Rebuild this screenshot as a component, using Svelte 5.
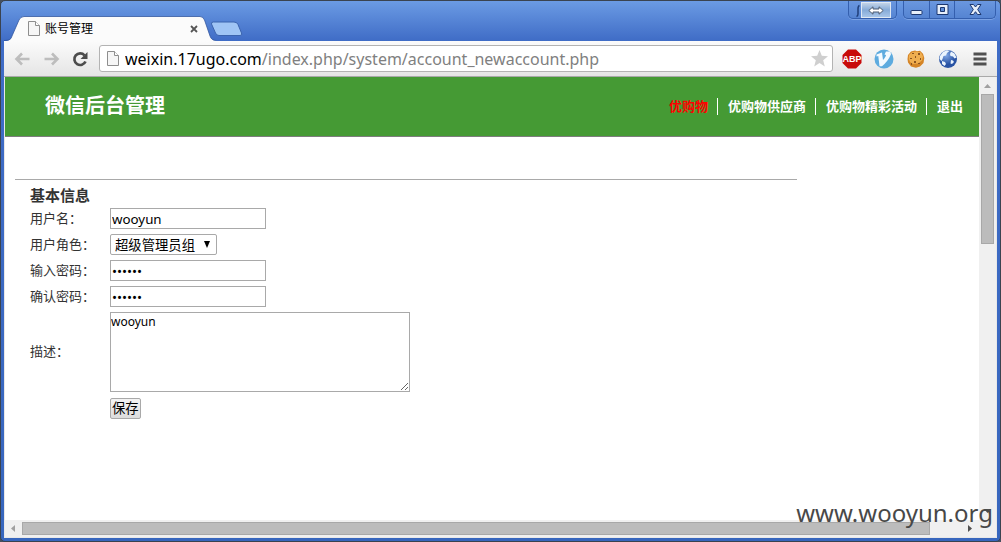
<script>
  const nav = [
    { label: '优购物', current: true },
    { label: '优购物供应商' },
    { label: '优购物精彩活动' },
    { label: '退出' }
  ];
  const roles = ['超级管理员组'];

  let username = $state('wooyun');
  let role = $state('超级管理员组');
  let password = $state('wooyun');
  let confirmation = $state('wooyun');
  let description = $state('wooyun');
</script>

{#snippet pageIcon()}
  <svg class="file" width="12" height="15" viewBox="0 0 12 15" aria-hidden="true">
    <path d="M.5.5h7l4 4v10H.5z" fill="#f6f6f6" stroke="#8e8e8e" />
    <path d="M7.5.5v4h4" fill="#fff" stroke="#8e8e8e" />
  </svg>
{/snippet}

<div class="window">
  <header class="titlebar">
    <div class="tab">
      <svg class="tab-shape" width="212" height="25" viewBox="0 0 212 25" aria-hidden="true">
        <path d="M0 25C6 25 7 23 8 20L15 4Q16.500 .5 20 .5H196Q199 .5 200.500 4L206 20Q207.500 24.500 212 24.500V25z" fill="#fbfbfb" />
        <path d="M0 24.500C6 24.500 7 23 8 20L15 4Q16.500 .5 20 .5H196Q199 .5 200.500 4L206 20Q207.500 24.500 212 24.500" fill="none" stroke="#2f539b" stroke-opacity=".75" />
      </svg>
      <div class="tab-content">
        {@render pageIcon()}
        <span>账号管理</span>
        <button class="plain close" aria-label="关闭标签页">
          <svg width="8" height="8" viewBox="0 0 8 8"><path d="M1 1l6 6M7 1L1 7" stroke="#555" stroke-width="1.800" /></svg>
        </button>
      </div>
    </div>
    <button class="plain newtab" aria-label="新标签页">
      <svg width="33" height="16" viewBox="0 0 33 16">
        <path d="M3.500 1H24Q27 1 28 3.500L31.500 12Q32.500 14.500 30 14.500H9Q6.500 14.500 5.500 12L1.500 3Q1 1 3.500 1z" fill="#9fc5f5" stroke="#3b64ae" />
      </svg>
    </button>
    <div class="caption">
      <div class="group resize">
        <svg width="12" height="18" viewBox="0 0 12 18" aria-hidden="true"><path d="M10.500 4.500Q9 5 9 8v5q0 2-1.500 2.500" fill="none" stroke="#1f3e78" stroke-width="1.500" /></svg>
        <button class="plain" aria-label="切换窗口">
          <svg width="16" height="9" viewBox="0 0 16 9"><path d="M.8 4.500L5 .8v2.200h6V.8l4.200 3.700L11 8.200V6H5v2.200z" fill="#fff" stroke="#4c5b70" /></svg>
        </button>
      </div>
      <div class="group controls">
        <button class="plain" aria-label="最小化">
          <svg width="13" height="13" viewBox="0 0 13 13"><rect x="1" y="7.500" width="11" height="4" rx="1" fill="#e7effa" stroke="#1c376f" /></svg>
        </button>
        <button class="plain" aria-label="最大化">
          <svg width="13" height="13" viewBox="0 0 13 13"><path fill-rule="evenodd" d="M1 1.500h11v10H1zM4.500 4.500v4h4v-4z" fill="#e7effa" stroke="#1c376f" /></svg>
        </button>
        <button class="plain" aria-label="关闭">
          <svg width="13" height="13" viewBox="0 0 13 13"><path d="M1 1.500h3.500l2 2.500 2-2.500H12L8.700 6.500l3.300 5H8.500l-2-2.800-2 2.800H1l3.300-5z" fill="#e7effa" stroke="#1c376f" /></svg>
        </button>
      </div>
    </div>
  </header>

  <div class="toolbar">
    <div class="history">
      <button class="plain" aria-label="后退">
        <svg width="17" height="16" viewBox="0 0 17 16"><path d="M15.500 8H3M8 2.500L2.500 8 8 13.500" fill="none" stroke="#bdbdbd" stroke-width="2.600" /></svg>
      </button>
      <button class="plain" aria-label="前进">
        <svg width="17" height="16" viewBox="0 0 17 16"><path d="M1.500 8H14M9 2.500L14.500 8 9 13.500" fill="none" stroke="#bdbdbd" stroke-width="2.600" /></svg>
      </button>
      <button class="plain" aria-label="重新加载">
        <svg width="17" height="16" viewBox="0 0 17 16">
          <path d="M13.500 10.500A5.800 5.800 0 1 1 12.500 4.300" fill="none" stroke="#4c4c4c" stroke-width="2.700" />
          <path d="M15.500 1v7H8.500z" fill="#4c4c4c" />
        </svg>
      </button>
    </div>
    <div class="omnibox">
      {@render pageIcon()}
      <div class="url"><span>weixin.17ugo.com</span>/index.php/system/account_newaccount.php</div>
      <button class="plain" aria-label="加入书签">
        <svg width="17" height="17" viewBox="0 0 17 17"><path d="M8.500 0l2.300 5.800 6.200.4-4.800 4 1.600 6.300-5.300-3.500-5.300 3.500 1.600-6.300L0 6.200l6.200-.4z" fill="#cfcfcf" /></svg>
      </button>
    </div>
    <div class="extensions">
      <button class="plain" aria-label="Adblock Plus">
        <svg width="20" height="20" viewBox="0 0 20 20">
          <path d="M6 .5h8L19.500 6v8L14 19.500H6L.5 14V6z" fill="#c80a0a" />
          <text x="10" y="13" text-anchor="middle" class="abp">ABP</text>
        </svg>
      </button>
      <button class="plain" aria-label="Vimium">
        <svg width="20" height="20" viewBox="0 0 20 20">
          <circle cx="10" cy="10" r="9.500" fill="#5dabdf" />
          <path d="M2.500 5.500L8 3.500 9 11q3-3.500 3-5l-1.500-.5L12 2.500h4.500l.5 2.700q-3 7-9 12H5.500L4.300 7l-1.800.5z" fill="#f3faff" />
        </svg>
      </button>
      <button class="plain" aria-label="Cookies">
        <svg width="20" height="20" viewBox="0 0 20 20">
          <path d="M2 6l3-3.500 4-1 2 .8 3-.6 3 3 1.300 4.300L17.500 14 14 17.500l-4 1.300-5-1.300L2 13.500 1.500 10z" fill="#d58527" />
          <path d="M3 6l3-2.800 4-.7 5 1 2 4-1 4-4 3-5 .5-3-2L2.800 10z" fill="#efae50" />
          <g fill="#8a5420"><rect x="6" y="4" width="2" height="1" /><rect x="12" y="4" width="2" height="2" /><rect x="9" y="7" width="1" height="2" /><rect x="4" y="9" width="2" height="1" /><rect x="14" y="9" width="1" height="2" /><rect x="8" y="12" width="2" height="2" /><rect x="12" y="14" width="2" height="1" /><rect x="5" y="14" width="1" height="2" /></g>
        </svg>
      </button>
      <button class="plain" aria-label="代理">
        <svg width="20" height="20" viewBox="0 0 20 20">
          <defs><radialGradient id="sea" cx=".4" cy=".3"><stop offset="0" stop-color="#7fa6e4" /><stop offset="1" stop-color="#2853a4" /></radialGradient></defs>
          <circle cx="10" cy="10" r="9" fill="url(#sea)" />
          <path d="M2 7l3-4 4-1.700 2.500.7L9 4 8 6.500 5.500 7l-1 3-1 2-2-2zM13 2.500l3.500 2 2 4-2 1-1.500-2-2.500-.5-.5-2zM4 12l3 1 1 2-1.500 2L4 15zM13 11l2 .5 1 1.500-2 2-1.500-.5z" fill="#eaf4fd" />
        </svg>
      </button>
      <button class="plain menu" aria-label="菜单">
        <svg width="14" height="14" viewBox="0 0 14 14"><path d="M.5 2h13M.5 7h13M.5 12h13" stroke="#505050" stroke-width="3" /></svg>
      </button>
    </div>
  </div>

  <div class="viewport">
    <main class="page">
      <div class="site-header">
        <h1>微信后台管理</h1>
        <nav>
          {#each nav as item}
            <a href="#top" class:current={item.current}>{item.label}</a>
          {/each}
        </nav>
      </div>
      <form onsubmit={(e) => e.preventDefault()}>
        <h2>基本信息</h2>
        <div class="fields">
          <label for="username">用户名：</label>
          <input id="username" type="text" bind:value={username} />
          <label for="role">用户角色：</label>
          <div class="select">
            <select id="role" bind:value={role}>
              {#each roles as name}
                <option>{name}</option>
              {/each}
            </select>
            <svg width="6" height="7" viewBox="0 0 6 7" aria-hidden="true"><path d="M0 0h6L3 7z" /></svg>
          </div>
          <label for="password">输入密码：</label>
          <input id="password" type="password" bind:value={password} />
          <label for="confirmation">确认密码：</label>
          <input id="confirmation" type="password" bind:value={confirmation} />
          <label for="description">描述：</label>
          <textarea id="description" bind:value={description}></textarea>
          <button class="save">保存</button>
        </div>
      </form>
    </main>
    <div class="scroll vertical" aria-hidden="true">
      <svg width="7" height="4" viewBox="0 0 7 4"><path d="M0 4L3.500 0 7 4z" fill="#a0a0a0" /></svg>
      <div class="thumb"></div>
      <svg width="7" height="4" viewBox="0 0 7 4"><path d="M0 0h7L3.500 4z" fill="#505050" /></svg>
    </div>
    <div class="scroll horizontal" aria-hidden="true">
      <svg width="4" height="7" viewBox="0 0 4 7"><path d="M4 0v7L0 3.500z" fill="#a0a0a0" /></svg>
      <div class="thumb"></div>
      <svg width="4" height="7" viewBox="0 0 4 7"><path d="M0 0v7l4-3.500z" fill="#505050" /></svg>
    </div>
    <div class="corner"></div>
  </div>
  <div class="watermark">www.wooyun.org</div>
</div>

<style>
  :global(body) {
    margin: 0;
    background: #46505f;
  }

  .window {
    position: relative;
    box-sizing: border-box;
    min-height: 100vh;
    display: flex;
    flex-direction: column;
    padding: 0 3px 3px;
    border: 1px solid #3a4350;
    border-radius: 5px;
    background: linear-gradient(#6b9be4, #3f6cc6 40px, #3766bd);
    font-family: "Noto Sans", "Noto Sans CJK SC", sans-serif;
  }

  svg {
    display: block;
    flex: none;
  }

  .plain {
    display: flex;
    align-items: center;
    justify-content: center;
    padding: 0;
    border: 0;
    background: none;
  }

  .titlebar {
    display: flex;
    height: 40px;
    padding-right: 1px;
  }

  .tab {
    display: grid;
    align-self: flex-end;
    width: 206px;
    height: 25px;
  }

  .tab-shape,
  .tab-content {
    grid-area: 1 / 1;
  }

  .tab-content {
    position: relative;
    display: flex;
    align-items: center;
    gap: 5px;
    padding: 0 12px 0 24px;
    font-size: 12px;
    line-height: 24px;
    color: #000;
  }

  .close {
    margin: 0 6px 0 auto;
  }

  .newtab {
    align-self: flex-end;
    margin-bottom: 4px;
  }

  .caption {
    display: flex;
    align-items: flex-start;
    gap: 6px;
    margin-left: auto;
  }

  .group {
    display: flex;
    box-sizing: border-box;
    height: 18px;
    border: 1px solid #345fae;
    border-top: 0;
    border-radius: 0 0 5px 5px;
    background: linear-gradient(#6a97df, #5584d2);
    box-shadow: 0 1px #7ba2e4;
  }

  .resize {
    width: 49px;
  }

  .resize button {
    width: 30px;
    height: 16px;
    margin-top: 1px;
    border: 1px solid #e0e9f3;
    background: linear-gradient(#c2d3e8, #86abd8 50%, #a7c5e8);
  }

  .controls button {
    width: 25px;
  }

  .controls button:last-child {
    width: 41px;
  }

  .controls button + button {
    border-left: 1px solid #345fae;
  }

  .toolbar {
    display: flex;
    align-items: center;
    gap: 9px;
    box-sizing: border-box;
    height: 36px;
    padding: 0 10px;
    border-bottom: 1px solid #a9a9a9;
    background: linear-gradient(#fbfbfb, #e5e5e5);
  }

  .history {
    display: flex;
    gap: 12px;
    padding-right: 1px;
  }

  .omnibox {
    display: flex;
    flex: 1;
    align-items: center;
    gap: 6px;
    min-width: 0;
    box-sizing: border-box;
    height: 27px;
    padding: 0 4px 0 7px;
    border: 1px solid #b3b3b3;
    border-radius: 3px;
    background: #fff;
  }

  .url {
    flex: 1;
    overflow: hidden;
    white-space: nowrap;
    font-size: 16px;
    line-height: 24px;
    color: #808080;
  }

  .url span {
    color: #000;
  }

  .extensions {
    display: flex;
    align-items: center;
    gap: 12px;
  }

  .menu {
    margin-left: 3px;
  }

  .abp {
    font: bold 9px "Liberation Sans", sans-serif;
    fill: #fff;
  }

  .viewport {
    display: grid;
    flex: 1;
    grid-template: 1fr 17px / 1fr 17px;
    border: 1px solid #e8e8e8;
    border-top: 0;
    background: #fff;
  }

  .site-header {
    display: flex;
    align-items: center;
    justify-content: space-between;
    box-sizing: border-box;
    height: 60px;
    padding: 0 7px 1px 40px;
    border-bottom: 1px solid #7d7d7d;
    background: #459a34;
  }

  h1,
  h2 {
    margin: 0;
  }

  h1 {
    font-size: 20px;
    line-height: 28px;
    color: #fff;
  }

  nav {
    display: flex;
  }

  nav a {
    padding: 0 9px 0 10px;
    font-size: 13px;
    font-weight: bold;
    line-height: 17px;
    color: #fff;
    text-decoration: none;
  }

  nav a + a {
    border-left: 1px solid #fff;
  }

  nav a.current {
    color: #f00;
  }

  form {
    margin: 42px 182px 0 10px;
    padding: 4px 15px;
    border-top: 1px solid #a9a9a9;
    color: #333;
  }

  h2 {
    padding-bottom: 2px;
    font-size: 15px;
    line-height: 22px;
  }

  .fields {
    display: grid;
    grid-template-columns: 80px 1fr;
    gap: 5px 0;
    align-items: center;
    justify-items: start;
  }

  label {
    padding-bottom: 2px;
    font-size: 13px;
    line-height: 18px;
  }

  input,
  select,
  textarea,
  .save {
    box-sizing: border-box;
    margin: 0;
    border: 1px solid #a9a9a9;
    background: #fff;
    font-family: inherit;
    color: #000;
  }

  input {
    width: 156px;
    height: 21px;
    padding: 1px;
  }

  .select {
    display: grid;
    align-items: center;
  }

  .select select,
  .select svg {
    grid-area: 1 / 1;
  }

  .select svg {
    justify-self: end;
    margin-right: 7px;
    pointer-events: none;
  }

  select {
    width: 107px;
    height: 21px;
    padding: 0 4px;
    border-radius: 2px;
    appearance: none;
  }

  textarea {
    width: 300px;
    height: 80px;
    padding: 0;
    font-size: 12px;
    line-height: 18px;
    resize: both;
  }

  .save {
    grid-column: 2;
    height: 21px;
    margin-top: 1px;
    padding: 0 1px;
    border-radius: 2px;
    background: linear-gradient(#f4f4f4, #dcdcdc);
    line-height: 19px;
  }

  .scroll,
  .corner {
    background: #f0f0f0;
  }

  .scroll {
    display: flex;
    align-items: center;
    justify-content: space-between;
    box-sizing: border-box;
  }

  .thumb {
    box-sizing: border-box;
    border: 1px solid #a8a8a8;
    background: #bcbcbc;
  }

  .vertical {
    flex-direction: column;
    padding: 7px 0;
  }

  .vertical .thumb {
    width: 13px;
    height: 35%;
    margin: 6px 0 auto;
  }

  .horizontal {
    padding: 0 7px 0 6px;
  }

  .horizontal .thumb {
    width: calc(100% - 53px);
    height: 13px;
    margin: 0 auto 0 7px;
  }

  .watermark {
    position: absolute;
    right: 7px;
    bottom: 12px;
    font-size: 24px;
    line-height: 32px;
    color: #484848;
    pointer-events: none;
  }
</style>
